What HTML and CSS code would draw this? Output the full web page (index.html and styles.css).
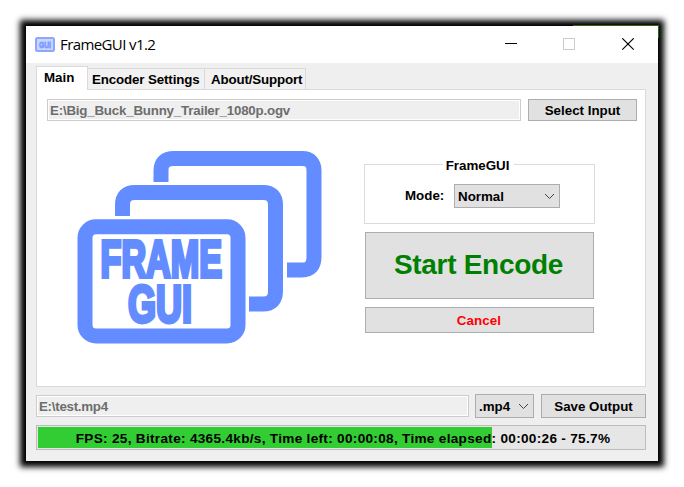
FILE: index.html
```html
<!DOCTYPE html>
<html lang="en">
<head>
<meta charset="utf-8">
<title>FrameGUI v1.2</title>
<link rel="stylesheet" href="styles.css">
</head>
<body>
<main class="window">
  <header class="titlebar">
    <svg class="app-icon" width="20" height="15" viewBox="0 0 20 15">
      <rect x="1" y="1" width="18" height="13" rx="1.5" fill="#c9d6ff" stroke="#8ba7ff" stroke-width="2"/>
      <text x="4" y="11" textLength="12" lengthAdjust="spacingAndGlyphs" class="icon-text">GUI</text>
    </svg>
    <h1 class="title"><span class="t-title">FrameGUI v1.2</span></h1>
    <svg class="controls" width="132" height="14" viewBox="0 0 132 14">
      <path d="M0 5.5h12" stroke="#000"/>
      <rect x="58.500" y="0.500" width="11" height="11" fill="none" stroke="#ccc"/>
      <path d="M117.300 .3l11.400 11.400M128.700 .3l-11.400 11.400" stroke="#000" stroke-width="1.100"/>
    </svg>
  </header>
  <div class="content">
    <nav class="tabs">
      <div class="tab tab-main active"><span class="t-main">Main</span></div>
      <div class="tab tab-encoder"><span class="t-encoder">Encoder Settings</span></div>
      <div class="tab tab-about"><span class="t-about">About/Support</span></div>
    </nav>
    <section class="page">
      <div class="row input-row">
        <div class="entry"><span class="t-input">E:\Big_Buck_Bunny_Trailer_1080p.ogv</span></div>
        <div class="button select-input"><span class="t-select">Select Input</span></div>
      </div>
      <div class="columns">
        <svg class="logo" width="280" height="220" viewBox="0 0 280 220">
          <g fill="none" stroke="#628cff" stroke-width="15">
            <path d="M101 42V30.500Q101 18.500 114 18.500H242Q254 18.500 254 31V117Q254 130 242 130H227"/>
            <path d="M62.500 76V65Q62.500 52.500 75 52.500H203Q215.500 52.500 215.500 65V151Q215.500 164 203 164H189"/>
            <rect x="25" y="86.800" width="153" height="109.200" rx="11"/>
          </g>
          <g class="logo-text">
            <text x="40.500" y="137" textLength="121.500" lengthAdjust="spacingAndGlyphs">FRAME</text>
            <text x="68" y="182" textLength="64" lengthAdjust="spacingAndGlyphs">GUI</text>
          </g>
        </svg>
        <div class="actions">
          <div class="group">
            <div class="legend"><span class="t-legend">FrameGUI</span></div>
            <span class="mode-label"><span class="t-mode">Mode:</span></span>
            <div class="combo mode-combo"><span class="t-normal">Normal</span>
              <svg width="11" height="7" viewBox="0 0 11 7"><path d="M1 1l4.500 4.500L10 1"/></svg></div>
          </div>
          <div class="button start"><span class="t-start">Start Encode</span></div>
          <div class="button cancel"><span class="t-cancel">Cancel</span></div>
        </div>
      </div>
    </section>
    <div class="row output-row">
      <div class="entry"><span class="t-output">E:\test.mp4</span></div>
      <div class="combo ext-combo"><span class="t-ext">.mp4</span>
        <svg width="11" height="7" viewBox="0 0 11 7"><path d="M1 1l4.500 4.500L10 1"/></svg></div>
      <div class="button save"><span class="t-save">Save Output</span></div>
    </div>
    <div class="progress"><span class="t-progress">FPS: 25, Bitrate: 4365.4kb/s, Time left: 00:00:08, Time elapsed: 00:00:26 - 75.7%</span></div>
  </div>
</main>
</body>
</html>
```
FILE: styles.css
```css
* { box-sizing: border-box; }
body {
  margin: 0;
  padding: 26px;
  background: #fff;
  font: bold 13.33px/16px "Liberation Sans", Arial, sans-serif;
  color: #000;
  overflow: hidden;
}
span { white-space: nowrap; }
.window {
  position: relative;
  width: 632px;
  height: 435px;
  background: #efefef;
  box-shadow: 0 0 6px 6px #000;
}
/* sliver of the desktop showing at the top right corner */
.window::before {
  content: "";
  position: absolute;
  top: -1px;
  right: -1px;
  width: 85px;
  height: 12px;
  border-top: 1px solid #2c6412;
  border-right: 1px solid #2c6412;
}
.titlebar {
  height: 37px;
  background: #fff;
  display: flex;
  align-items: center;
  padding: 0 21px 0 9px;
}
.app-icon { display: block; }
.icon-text { font: bold 9.500px "Liberation Sans", sans-serif; fill: #7f9dff; stroke: #7f9dff; stroke-width: .8px; }
.title { margin: 0 0 1px 5px; font: 400 15px/20px "Open Sans", sans-serif; }
.t-title { letter-spacing: -.6px; }
.controls { margin-left: auto; }
.content { padding: 3px 12px 0 10px; }
.tabs { display: flex; align-items: flex-end; height: 23px; }
.tab { height: 21px; border: 1px solid #dadada; border-left: 0; border-bottom: 0; background: #f1f1f1; padding-top: 3px; padding-left: 4px; }
.tab.active { height: 24px; width: 52px; margin-bottom: -1px; position: relative; border-left: 1px solid #dadada; background: #fff; padding: 3px 0 0 7px; }
.tab-encoder { width: 117px; }
.t-encoder { letter-spacing: -.13px; }
.tab-about { width: 101px; padding-left: 6px; }
.t-about { letter-spacing: -.15px; }
.page { height: 298px; border: 1px solid #dadada; background: #fff; padding: 9px 8px 0 10px; }
.row { display: flex; }
.entry { flex: 1; height: 22px; border: 1px solid #ccc; background: #efefef; box-shadow: inset 0 0 0 1px #fff; color: #6d6d6d; padding: 3px 0 0 2px; }
.t-input { letter-spacing: -.21px; }
.t-output { letter-spacing: -.27px; }
.button { display: flex; align-items: center; justify-content: center; border: 1px solid #adadad; background: #e1e1e1; padding-top: 2px; }
.select-input { width: 109px; height: 22px; margin-left: 7px; }
.columns { display: flex; }
.logo { display: block; margin: 19px 0 0 13px; }
.logo-text text { font: bold 51.500px "Liberation Sans", sans-serif; fill: #628cff; stroke: #628cff; stroke-width: 3.800px; }
.actions { width: 231px; margin: 43px 0 0 24px; }
.group { height: 60px; border: 1px solid #dcdcdc; display: flex; align-items: flex-start; padding: 19px 0 0 40px; position: relative; }
.legend { position: absolute; top: -7px; left: 78px; width: 71px; height: 16px; background: #fff; text-align: center; }
.t-legend { margin-right: 2px; }
.mode-label { width: 49px; padding-top: 4px; }
.combo { display: flex; align-items: center; justify-content: space-between; border: 1px solid #adadad; background: #e1e1e1; padding: 0 4px 0 3px; height: 24px; }
.combo span { padding-top: 2px; }
.combo path { fill: none; stroke: #444; }
.mode-combo { width: 106px; }
.start { height: 67px; margin: 8px 1px 0; padding: 0 2px 2px 0; color: #008000; font-size: 28px; line-height: 34px; }
.t-start { letter-spacing: -.3px; }
.cancel { height: 26px; margin: 8px 1px 0; padding-right: 1px; color: #f00; }
.t-cancel { letter-spacing: .1px; }
.output-row { margin-top: 7px; height: 24px; }
.output-row .entry { margin-top: 1px; }
.ext-combo { width: 59px; margin-left: 6px; }
.save { width: 105px; height: 24px; margin-left: 7px; }
.progress { margin-top: 7px; height: 25px; border: 1px solid #bcbcbc; background: linear-gradient(#32cd32, #32cd32) 1px 1px / 454px 21px no-repeat #e6e6e6; text-align: center; padding: 5px 0 0 4px; }
.t-progress { font-size: 13.6px; letter-spacing: .3px; }
```
